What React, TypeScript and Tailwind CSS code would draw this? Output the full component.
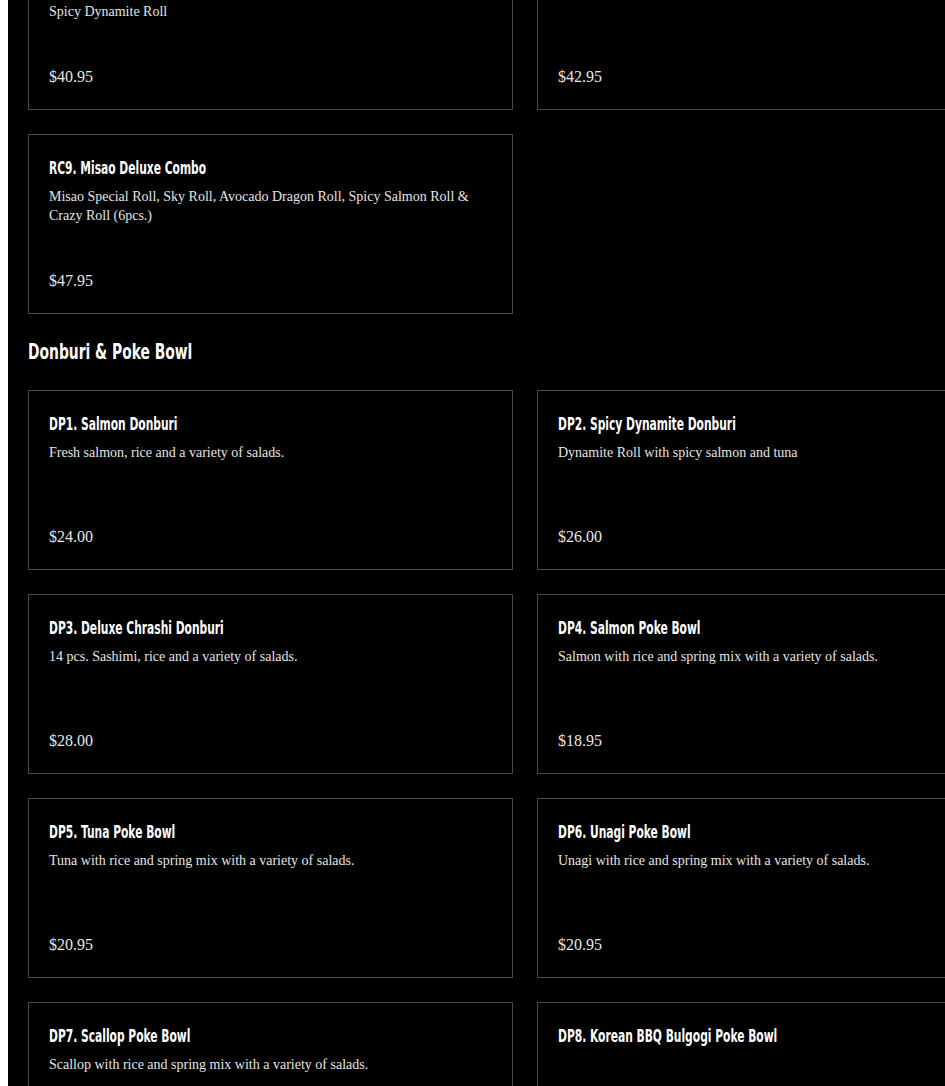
type MenuItem = {
  name: string;
  description: string;
  price: string;
};

const rolls: MenuItem[] = [
  {
    name: 'RC7. Misao Party Combo',
    description: 'California Roll, Spicy Tuna Roll, Salmon Avocado Roll, Rainbow Roll &',
    price: '$40.95',
  },
  {
    name: 'RC8. Misao Family Combo',
    description: 'Dynamite Roll, Spider Roll, Philadelphia Roll with a Salmon Roll',
    price: '$42.95',
  },
  {
    name: 'RC9. Misao Deluxe Combo',
    description: 'Misao Special Roll, Sky Roll, Avocado Dragon Roll, Spicy Salmon Roll & Crazy Roll (6pcs.)',
    price: '$47.95',
  },
];

const bowls: MenuItem[] = [
  { name: 'DP1. Salmon Donburi', description: 'Fresh salmon, rice and a variety of salads.', price: '$24.00' },
  { name: 'DP2. Spicy Dynamite Donburi', description: 'Dynamite Roll with spicy salmon and tuna', price: '$26.00' },
  { name: 'DP3. Deluxe Chrashi Donburi', description: '14 pcs. Sashimi, rice and a variety of salads.', price: '$28.00' },
  { name: 'DP4. Salmon Poke Bowl', description: 'Salmon with rice and spring mix with a variety of salads.', price: '$18.95' },
  { name: 'DP5. Tuna Poke Bowl', description: 'Tuna with rice and spring mix with a variety of salads.', price: '$20.95' },
  { name: 'DP6. Unagi Poke Bowl', description: 'Unagi with rice and spring mix with a variety of salads.', price: '$20.95' },
  { name: 'DP7. Scallop Poke Bowl', description: 'Scallop with rice and spring mix with a variety of salads.', price: '$20.95' },
  { name: 'DP8. Korean BBQ Bulgogi Poke Bowl', description: '', price: '$22.95' },
];

// no Oswald offline, so squeeze DejaVu Condensed horizontally
const condensed = 'block origin-left scale-x-[0.7] whitespace-nowrap font-["DejaVu_Sans_Condensed",sans-serif] font-bold';

function MenuCard({ item, extra }: { item: MenuItem; extra?: string }) {
  return (
    <div className="flex h-[180px] flex-col border border-[#4a4a4a] px-5 pb-5 pt-5">
      <h3 className="text-[17px] leading-[26px] text-white">
        <span className={condensed}>{item.name}</span>
      </h3>
      <p className="mt-1.5 min-h-[19px] font-['Liberation_Serif',serif] text-sm leading-[19px] text-[#e4e4e4]">
        {item.description}
        {extra && (
          <>
            <br />
            {extra}
          </>
        )}
      </p>
      <p className="mt-auto font-['Liberation_Serif',serif] text-base leading-6 text-[#e8e8e8]">{item.price}</p>
    </div>
  );
}

export default function App() {
  return (
    <div className="flex h-[1086px] w-[945px] overflow-hidden bg-white">
      <div className="ml-2 w-[1060px] shrink-0 bg-black px-5">
        <div className="-mt-[70px] grid grid-cols-[485px_485px] gap-6">
          <MenuCard item={rolls[0]} extra="Spicy Dynamite Roll" />
          <MenuCard item={rolls[1]} />
          <MenuCard item={rolls[2]} />
        </div>

        <h2 className="my-6 text-[22px] leading-7 text-white">
          <span className={condensed}>Donburi &amp; Poke Bowl</span>
        </h2>

        <div className="grid grid-cols-[485px_485px] gap-6">
          {bowls.map((item) => (
            <MenuCard key={item.name} item={item} />
          ))}
        </div>
      </div>
    </div>
  );
}
